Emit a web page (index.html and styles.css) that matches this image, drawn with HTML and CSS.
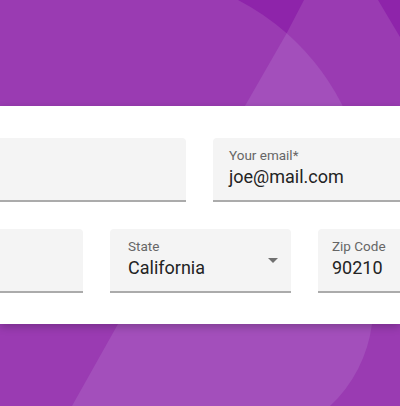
FILE: index.html
```html
<!DOCTYPE html>
<html lang="en">
<head>
<meta charset="utf-8">
<title>Address form</title>
<link rel="stylesheet" href="styles.css">
</head>
<body>
<div class="page">
  <svg class="backdrop" viewBox="0 0 400 406" width="400" height="406" aria-hidden="true">
    <rect width="400" height="406" fill="#9a3bb2"/>
    <path d="M238 0 A243 243 0 0 1 286.7 33.3 L304 0 Z" fill="#8e24aa"/>
    <path d="M378 0 L400 0 L400 37 Z" fill="#8e24aa"/>
    <path d="M286.7 33.3 L239.8 115 L347 115 A243 243 0 0 0 286.7 33.3 Z" fill="#a34fbb"/>
    <path d="M122.5 316 L374 316 L372 324 A136 136 0 0 1 330 406 L72 406 Z" fill="#a34fbb"/>
  </svg>
  <div class="card">
    <div class="row">
      <div class="field field-name"></div>
      <div class="field field-grow">
        <div class="field-body">
          <span class="label">Your email*</span>
          <span class="value">joe@mail.com</span>
        </div>
      </div>
    </div>
    <div class="row">
      <div class="field field-city"></div>
      <div class="field field-state">
        <div class="field-body">
          <span class="label">State</span>
          <span class="value">California</span>
        </div>
        <svg class="caret" width="10" height="5" viewBox="0 0 10 5" aria-hidden="true"><path d="M0 0 L10 0 L5 5 Z" fill="#707070"/></svg>
      </div>
      <div class="field field-grow field-zip">
        <div class="field-body">
          <span class="label">Zip Code</span>
          <span class="value">90210</span>
        </div>
      </div>
    </div>
  </div>
</div>
</body>
</html>
```

FILE: styles.css
```css
html, body {
  margin: 0;
  padding: 0;
}
body {
  width: 400px;
  height: 406px;
  overflow: hidden;
  font-family: Roboto, "Noto Sans", "Liberation Sans", sans-serif;
}
.page {
  position: relative;
  width: 400px;
  height: 406px;
  overflow: hidden;
  padding-top: 106px;
  box-sizing: border-box;
}
.backdrop {
  position: absolute;
  left: 0;
  top: 0;
  display: block;
}
.card {
  position: relative;
  background: #ffffff;
  height: 218px;
  box-sizing: border-box;
  padding: 32px 0 31px;
  display: flex;
  flex-direction: column;
  gap: 27px;
  box-shadow: 0 3px 8px rgba(0, 0, 0, 0.22);
}
.row {
  display: flex;
  gap: 27px;
  margin: 0 -40px;
}
.field {
  height: 64px;
  box-sizing: border-box;
  background: #f4f4f4;
  border-radius: 4px 4px 0 0;
  border-bottom: 2px solid #ababab;
  display: flex;
}
.field-name {
  flex: 0 0 226px;
}
.field-city {
  flex: 0 0 123px;
}
.field-state {
  flex: 0 0 181px;
}
.field-grow {
  flex: 1 1 auto;
}
.field-body {
  flex: 1 1 auto;
  display: flex;
  flex-direction: column;
  padding: 9px 0 0 16px;
}
.field-state .field-body {
  padding-left: 18px;
}
.field-zip .field-body {
  padding-left: 14px;
}
.label {
  font-size: 13.5px;
  line-height: 16px;
  color: #666666;
}
.value {
  margin-top: 3px;
  font-size: 18px;
  line-height: 22px;
  color: #232323;
}
.caret {
  flex: 0 0 auto;
  margin: 29px 13px 0 0;
}
```
